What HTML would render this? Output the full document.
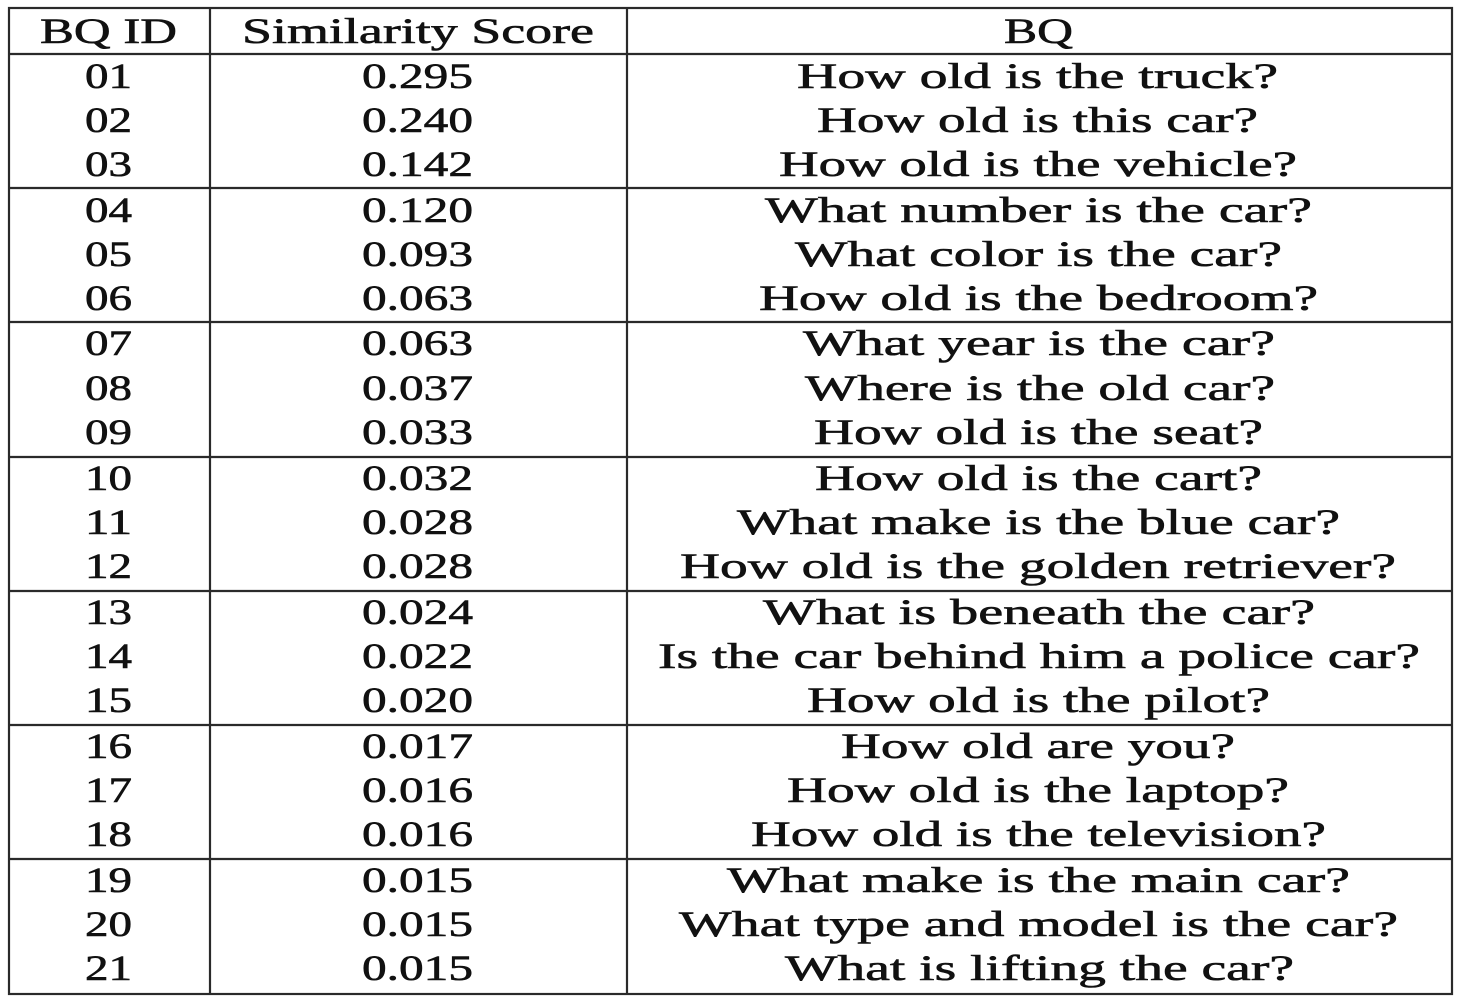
<!DOCTYPE html>
<html><head><meta charset="utf-8"><style>
html,body{margin:0;padding:0;background:#fff;width:1462px;height:1000px;overflow:hidden}
text{font-family:"Liberation Serif",serif;font-size:36px;fill:#111;stroke:#111;stroke-width:0.6}
</style></head><body>
<svg width="1462" height="1000" xmlns="http://www.w3.org/2000/svg">
<g stroke="#2a2a2a" stroke-width="2.2" fill="none">
<rect x="9" y="8" width="1443" height="986"/>
<line x1="210" y1="8" x2="210" y2="994"/>
<line x1="627" y1="8" x2="627" y2="994"/>
<line x1="9" y1="54" x2="1452" y2="54"/>
<line x1="9" y1="188" x2="1452" y2="188"/>
<line x1="9" y1="322" x2="1452" y2="322"/>
<line x1="9" y1="457" x2="1452" y2="457"/>
<line x1="9" y1="591" x2="1452" y2="591"/>
<line x1="9" y1="725" x2="1452" y2="725"/>
<line x1="9" y1="859" x2="1452" y2="859"/>
</g>
<g text-anchor="middle">
<text x="108.5" y="43" textLength="137" lengthAdjust="spacingAndGlyphs">BQ ID</text>
<text x="418" y="43" textLength="352" lengthAdjust="spacingAndGlyphs">Similarity Score</text>
<text x="1038.5" y="43" textLength="69" lengthAdjust="spacingAndGlyphs">BQ</text>
</g>
<g text-anchor="middle" id="rows"></g>
</svg>
<script>
var d=[
["01","0.295","How old is the truck?",797,1278,76],
["02","0.240","How old is this car?",817,1258,120],
["03","0.142","How old is the vehicle?",779,1297,164],
["04","0.120","What number is the car?",765,1312,210],
["05","0.093","What color is the car?",795,1282,254],
["06","0.063","How old is the bedroom?",759,1318,298],
["07","0.063","What year is the car?",803,1275,343],
["08","0.037","Where is the old car?",805,1275,388],
["09","0.033","How old is the seat?",814,1263,432],
["10","0.032","How old is the cart?",815,1262,478],
["11","0.028","What make is the blue car?",737,1340,522],
["12","0.028","How old is the golden retriever?",680,1396,566],
["13","0.024","What is beneath the car?",763,1315,612],
["14","0.022","Is the car behind him a police car?",658,1420,656],
["15","0.020","How old is the pilot?",807,1270,700],
["16","0.017","How old are you?",841,1235,746],
["17","0.016","How old is the laptop?",787,1289,790],
["18","0.016","How old is the television?",751,1326,834],
["19","0.015","What make is the main car?",727,1350,880],
["20","0.015","What type and model is the car?",679,1398,924],
["21","0.015","What is lifting the car?",785,1294,968]];
var g=document.getElementById("rows"),ns="http://www.w3.org/2000/svg";
function t(x,y,w,s){var e=document.createElementNS(ns,"text");e.setAttribute("x",x);e.setAttribute("y",y);e.setAttribute("textLength",w);e.setAttribute("lengthAdjust","spacingAndGlyphs");e.textContent=s;g.appendChild(e);}
d.forEach(function(r){var y=r[5]+12;t(108.5,y,47,r[0]);t(417.5,y,111,r[1]);t((r[3]+r[4])/2,y,r[4]-r[3],r[2]);});
</script>
</body></html>
